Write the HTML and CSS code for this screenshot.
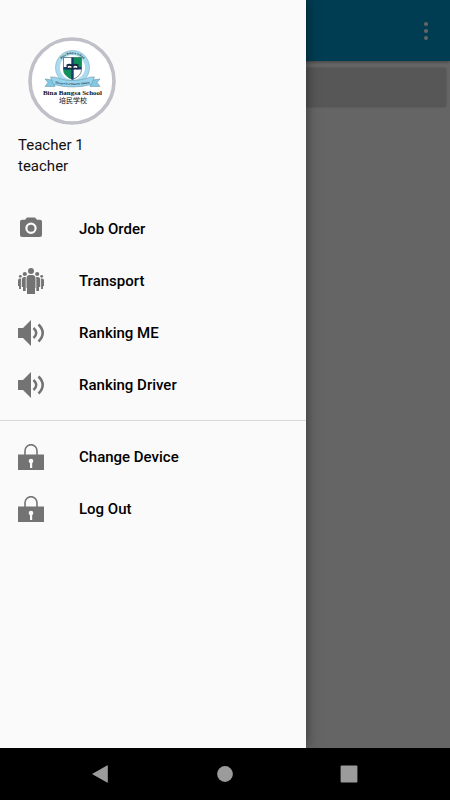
FILE: index.html
```html
<!DOCTYPE html>
<html lang="en">
<head>
<meta charset="utf-8">
<meta name="viewport" content="width=device-width, initial-scale=1">
<title>Bina Bangsa School</title>
<link rel="stylesheet" href="styles.css">
</head>
<body>
<svg class="sprite" aria-hidden="true">
  <symbol id="camera" viewBox="0 0 26 26">
    <path d="M9 1.500h8l2 2.300H22a2 2 0 0 1 2 2V19a2 2 0 0 1-2 2H4a2 2 0 0 1-2-2V5.800a2 2 0 0 1 2-2h3z"/>
    <circle cx="13" cy="12.300" r="4.600" fill="none" stroke="#fafafa" stroke-width="2.200"/>
  </symbol>
  <symbol id="people" viewBox="0 0 26 26">
    <circle cx="13" cy="3" r="3"/>
    <circle cx="6.800" cy="6" r="2.100"/><circle cx="19.200" cy="6" r="2.100"/>
    <circle cx="2.300" cy="8.300" r="1.400"/><circle cx="23.700" cy="8.300" r="1.400"/>
    <path d="M8.500 10.500q0-3.500 3-3.500h3q3 0 3 3.500V20h-.5v6h-8v-6h-.5z"/>
    <path d="M3.800 12q0-3 2.500-3H8q-.3 1-.3 2v12H5v-4H3.800zM22.200 12q0-3-2.500-3H18q.3 1 .3 2v12H21v-4h1.200z"/>
    <path d="M0 12.500Q0 10.500 2 10.500h1.200q-.3 1-.3 2V21H1v-3H0zM26 12.500q0-2-2-2h-1.200q.3 1 .3 2V21H25v-3h1z"/>
  </symbol>
  <symbol id="speaker" viewBox="0 0 26 26">
    <path d="M0 8h5l8-8v26l-8-8H0z"/>
    <path d="M15.500 8q5.500 5 0 10M20.500 4.500q8.500 8.500 0 17" fill="none" stroke="currentColor" stroke-width="2.500"/>
  </symbol>
  <symbol id="lock" viewBox="0 0 26 26">
    <path d="M7 11V6.700a6 6 0 0 1 12 0V11" fill="none" stroke="currentColor" stroke-width="1.600"/>
    <path d="M0 10.500h26V26H0z"/>
    <circle cx="13" cy="17" r="2.300" fill="#fafafa"/>
    <path d="M12 17h2.200v7H12z" fill="#fafafa"/>
  </symbol>
</svg>

<div class="app">
  <header class="appbar">
    <button class="more" type="button" aria-label="More options"><i></i><i></i><i></i></button>
  </header>
  <main class="content"><div class="card"></div></main>
  <div class="scrim"></div>

  <aside class="drawer">
    <div class="profile">
      <svg class="avatar" viewBox="0 0 88 88" role="img" aria-label="Bina Bangsa School">
        <defs><path id="ring" d="M33.700 40.500A14.300 14.300 0 1 1 55.300 40.500"/></defs>
        <circle cx="44" cy="44" r="42" fill="#fff" stroke="#bfc0c8" stroke-width="3.600"/>
        <circle cx="44.500" cy="30.500" r="17" fill="#a9dcf0" stroke="#6ba0b5" stroke-width=".5"/>
        <circle cx="44.500" cy="30.500" r="12.500" fill="#fff"/>
        <text class="ring-text"><textPath href="#ring" startOffset="50%" text-anchor="middle">Bina Bangsa School</textPath></text>
        <path d="M35.500 20.500h18v12q0 6.500-9 10-9-3.500-9-10z" fill="#fff" stroke="#3a5361" stroke-width=".7"/>
        <path d="M44.500 20.500h9v10h-9zM35.500 30.500h9v12q-9-3.500-9-10z" fill="#108f5b"/>
        <path d="M43.300 20.500h2.400v22h-2.400zM35.500 30h18v2.400h-18z" fill="#173b75"/>
        <path d="M38.500 27.500q3-1.500 6 0 3-1.500 6 0v5q-3-1-6 0-3-1-6 0z" fill="#18283f"/>
        <path d="M39.800 29.300q1.800-1 3.600 0v1.600q-1.800-.8-3.600 0zM45.600 29.300q1.800-1 3.600 0v1.600q-1.800-.8-3.600 0z" fill="#fff"/>
        <path d="M25 43l-8-1 3 3.500-3 4h10zM64 43l8-1-3 3.500 3 4H62z" fill="#83c8e2" stroke="#59889c" stroke-width=".5"/>
        <path d="M22.500 40q5-.5 8.500 1.500 13.500 4 27 0 3.500-2 8.500-1.500l-3 7.500q-19 5-38 0z" fill="#98d5ed" stroke="#59889c" stroke-width=".5"/>
        <path id="ribbon" d="M27 46.200q17.500 3.500 35 0" fill="none"/>
        <text class="ring-text"><textPath href="#ribbon" startOffset="50%" text-anchor="middle">Discere Est Vincere Omnia</textPath></text>
        <text class="school" x="44.500" y="57.500" text-anchor="middle">Bina Bangsa School</text>
        <text class="school-cn" x="45" y="66" text-anchor="middle">培民学校</text>
      </svg>
      <div class="name">Teacher 1</div>
      <div class="name">teacher</div>
    </div>
    <nav>
      <div class="group">
        <a class="item" href="#job"><svg><use href="#camera"/></svg>Job Order</a>
        <a class="item" href="#transport"><svg><use href="#people"/></svg>Transport</a>
        <a class="item" href="#me"><svg><use href="#speaker"/></svg>Ranking ME</a>
        <a class="item" href="#driver"><svg><use href="#speaker"/></svg>Ranking Driver</a>
      </div>
      <div class="group">
        <a class="item" href="#device"><svg><use href="#lock"/></svg>Change Device</a>
        <a class="item" href="#logout"><svg><use href="#lock"/></svg>Log Out</a>
      </div>
    </nav>
  </aside>
</div>

<footer class="sysbar">
  <button type="button" aria-label="Back"><svg viewBox="0 0 18 18"><path d="M0 9L15 .400q.8-.4.800.500v16.200q0 .9-.8.500z"/></svg></button>
  <button type="button" aria-label="Home"><svg viewBox="0 0 18 18"><circle cx="9" cy="9" r="7.900"/></svg></button>
  <button type="button" aria-label="Recent apps"><svg viewBox="0 0 18 18"><rect x=".6" y=".6" width="16.800" height="16.800" rx="1"/></svg></button>
</footer>
</body>
</html>
```

FILE: styles.css
```css
* { box-sizing: border-box; }

body {
  margin: 0;
  min-height: 100vh;
  display: flex;
  flex-direction: column;
  background: #000;
  font-family: Roboto, "Noto Sans", sans-serif;
  color: #111;
}

button {
  border: 0;
  padding: 0;
  background: none;
}

.sprite {
  position: absolute;
  width: 0;
  height: 0;
}

.app {
  position: relative;
  flex: 1;
  display: flex;
  flex-direction: column;
  overflow: hidden;
  background: #fdfdfd;
}

.appbar {
  display: flex;
  justify-content: flex-end;
  padding: 16px 16px 16px 0;
  height: 61px;
  background: #0099cc;
  box-shadow: 0 1px 3px rgba(0, 0, 0, .35);
}

.more {
  display: flex;
  flex-direction: column;
  align-items: center;
  justify-content: center;
  gap: 3px;
  width: 16px;
}

.more i {
  width: 4px;
  height: 4px;
  border-radius: 50%;
  background: #fff;
}

.content { padding: 7px 4px; }

.card {
  height: 39px;
  border-radius: 2px;
  background: #dadada;
  box-shadow: 0 0 2px rgba(0, 0, 0, .3);
}

.scrim {
  position: absolute;
  inset: 0;
  background: rgba(0, 0, 0, .6);
}

.drawer {
  position: absolute;
  top: 0;
  bottom: 0;
  left: 0;
  width: 68%;
  background: #fafafa;
  box-shadow: 0 0 12px rgba(0, 0, 0, .5);
}

.profile { padding: 37px 18px 26px; }

.avatar {
  display: block;
  width: 88px;
  height: 88px;
  margin: 0 0 10px 10px;
}

.ring-text {
  font: bold 3px "Liberation Serif", serif;
  fill: #142c43;
}

.school {
  font: bold 7px "Liberation Serif", serif;
  fill: #111;
}

.school-cn {
  font: 7px "Noto Sans CJK SC", sans-serif;
  fill: #111;
}

.name {
  font-size: 15px;
  line-height: 21px;
}

.item {
  display: flex;
  align-items: center;
  gap: 35px;
  height: 52px;
  padding: 0 18px;
  font-size: 15px;
  font-weight: 500;
  color: #000;
  text-decoration: none;
}

.item svg {
  flex: none;
  width: 26px;
  height: 26px;
  color: #737373;
  fill: currentColor;
}

.group + .group {
  margin-top: 9px;
  padding-top: 10px;
  border-top: 1px solid #d8d8d8;
}

.sysbar {
  display: flex;
  justify-content: center;
  gap: 106px;
  padding: 17px 0;
}

.sysbar button { display: flex; }

.sysbar svg {
  width: 18px;
  height: 18px;
  fill: #9b9b9b;
}
```
